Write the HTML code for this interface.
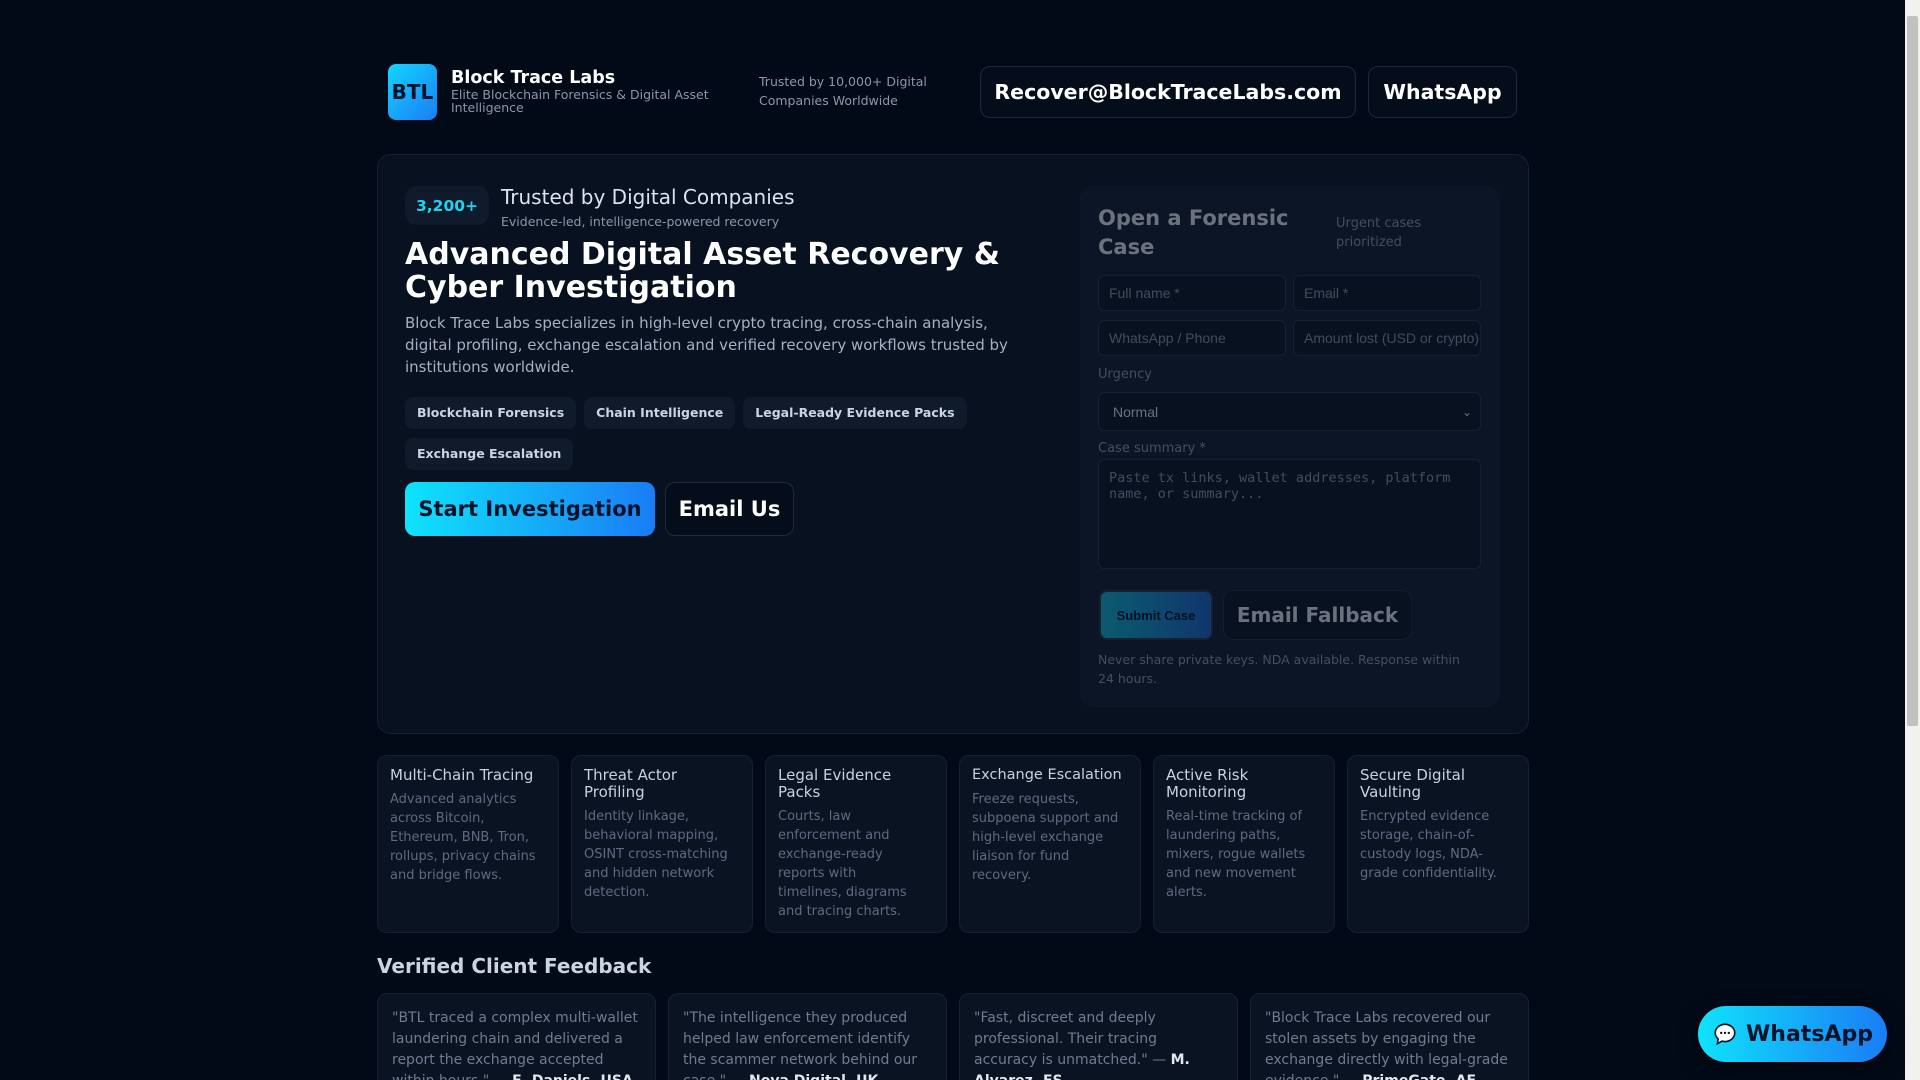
<!DOCTYPE html>
<html><head><meta charset="utf-8"><style>
*{box-sizing:border-box;margin:0;padding:0}
html,body{width:1920px;height:1080px;overflow:hidden}
body{background:#020a17;font-family:"DejaVu Sans","Liberation Sans",sans-serif;color:#e6edf6;position:relative}
.abs{position:absolute}
.sb{position:absolute;right:0;top:0;width:15px;height:1080px;background:#f1f1f1}
.sb i{position:absolute;left:2px;top:16px;width:11px;height:710px;background:#c1c1c1;border-radius:2px}
.logo{left:388px;top:64px;width:49px;height:56px;border-radius:8px;background:linear-gradient(135deg,#12d6ff,#1a7cf5);color:#04122a;font-weight:bold;font-size:20px;display:flex;align-items:center;justify-content:center}
.btn{position:absolute;border:1px solid #1e2a3c;border-radius:10px;background:#050d1b;color:#fff;font-weight:bold;display:flex;align-items:center;justify-content:center}
.card{position:absolute;background:#0a1322;border:1px solid #152033;border-radius:14px}
.tag{display:inline-block;background:#0f1a2b;border-radius:8px;padding:0 12px;height:32px;line-height:32px;font-size:12.5px;font-weight:bold;color:#cbd5e1;margin-right:8px}
.form{opacity:.45}
.inp{position:absolute;border:1px solid #24324a;border-radius:6px;background:#0a1322;font-family:"Liberation Sans",sans-serif;font-size:14px;color:#8593a8;padding-left:10px;display:flex;align-items:center}
.feat{position:absolute;top:755px;width:182px;height:178px;background:#0a1322;border:1px solid #152033;border-radius:10px;padding:11px 12px}
.feat h4{font-weight:normal;font-size:15px;line-height:17px;color:#c8d2de;margin-bottom:6px}
.feat p{font-size:13px;line-height:19px;color:#5d6a80}
.test{position:absolute;top:993px;width:279px;height:100px;background:#0a1322;border:1px solid #152033;border-radius:10px;padding:14px 14px;font-size:14px;line-height:21px;color:#6f7c90}
.test b{color:#e2e8f0}
</style></head><body>
<div class="sb"><i></i></div>
<div class="abs logo">BTL</div>
<div class="abs" style="left:451px;top:68px;font-size:17.5px;font-weight:bold;color:#fff">Block Trace Labs</div>
<div class="abs" style="left:451px;top:88px;font-size:12.5px;line-height:13px;color:#8a97ab;width:290px">Elite Blockchain Forensics &amp; Digital Asset Intelligence</div>
<div class="abs" style="left:759px;top:72px;font-size:12.5px;line-height:19px;color:#8a97ab;width:200px">Trusted by 10,000+ Digital Companies Worldwide</div>
<div class="btn" style="left:980px;top:66px;width:376px;height:52px;font-size:20.5px">Recover@BlockTraceLabs.com</div>
<div class="btn" style="left:1368px;top:66px;width:149px;height:52px;font-size:20.5px">WhatsApp</div>

<div class="card" style="left:377px;top:154px;width:1152px;height:580px;background:#081120"></div>
<div class="abs" style="left:405px;top:186px;width:84px;height:39px;border-radius:12px;background:#0f1a2b;color:#22d3ee;font-weight:bold;font-size:15.5px;display:flex;align-items:center;justify-content:center">3,200+</div>
<div class="abs" style="left:501px;top:185px;font-size:20px;color:#dbe3ee">Trusted by Digital Companies</div>
<div class="abs" style="left:501px;top:214px;font-size:12.5px;color:#8a97ab">Evidence-led, intelligence-powered recovery</div>
<h1 class="abs" style="left:405px;top:238px;font-size:30px;line-height:33px;color:#fff;width:640px">Advanced Digital Asset Recovery &amp; Cyber Investigation</h1>
<div class="abs" style="left:405px;top:312px;font-size:15px;line-height:22px;color:#a5b1c2;width:610px">Block Trace Labs specializes in high-level crypto tracing, cross-chain analysis, digital profiling, exchange escalation and verified recovery workflows trusted by institutions worldwide.</div>
<div class="abs" style="left:405px;top:391px;width:620px;line-height:41px"><span class="tag">Blockchain Forensics</span><span class="tag">Chain Intelligence</span><span class="tag">Legal-Ready Evidence Packs</span><br><span class="tag">Exchange Escalation</span></div>
<div class="abs" style="left:405px;top:482px;width:250px;height:54px;border-radius:10px;background:linear-gradient(90deg,#0fe3fb,#1a7cf5);color:#04122a;font-weight:bold;font-size:21px;display:flex;align-items:center;justify-content:center">Start Investigation</div>
<div class="btn" style="left:665px;top:482px;width:129px;height:54px;font-size:21px">Email Us</div>

<div class="form">
<div class="card" style="left:1080px;top:186px;width:420px;height:521px;background:#101b2c"></div>
<div class="abs" style="left:1098px;top:204px;font-size:21px;line-height:29px;font-weight:bold;color:#e2e8f0;width:200px">Open a Forensic Case</div>
<div class="abs" style="left:1336px;top:214px;font-size:13px;line-height:19px;color:#8a97ab;width:120px">Urgent cases prioritized</div>
<div class="inp" style="left:1098px;top:275px;width:188px;height:36px">Full name *</div>
<div class="inp" style="left:1293px;top:275px;width:188px;height:36px">Email *</div>
<div class="inp" style="left:1098px;top:320px;width:188px;height:36px">WhatsApp / Phone</div>
<div class="inp" style="left:1293px;top:320px;width:188px;height:36px">Amount lost (USD or crypto)</div>
<div class="abs" style="left:1098px;top:367px;font-size:13px;color:#8a97ab">Urgency</div>
<div class="inp" style="left:1098px;top:392px;width:383px;height:39px;color:#dbe3ee;padding-left:14px">Normal<span style="position:absolute;right:8px;font-size:12px">⌄</span></div>
<div class="abs" style="left:1098px;top:441px;font-size:13px;color:#8a97ab">Case summary *</div>
<div class="inp" style="left:1098px;top:459px;width:383px;height:110px;align-items:flex-start;padding-top:10px;font-family:'DejaVu Sans Mono',monospace;font-size:13.5px;line-height:16px">Paste tx links, wallet addresses, platform name, or summary...</div>
<div class="abs" style="left:1099px;top:590px;width:114px;height:50px;border-radius:8px;background:linear-gradient(90deg,#11b5cf,#1a63c9);color:#04122a;font-family:'Liberation Sans',sans-serif;font-weight:bold;font-size:13px;display:flex;align-items:center;justify-content:center;border:2px solid #2a3444">Submit Case</div>
<div class="btn" style="left:1223px;top:590px;width:189px;height:50px;font-size:20px;color:#e2e8f0;background:#0a1322">Email Fallback</div>
<div class="abs" style="left:1098px;top:650px;font-size:12.5px;line-height:19px;color:#8a97ab;width:380px">Never share private keys. NDA available. Response within 24 hours.</div>
</div>

<div class="feat" style="left:377px"><h4>Multi-Chain Tracing</h4><p>Advanced analytics across Bitcoin, Ethereum, BNB, Tron, rollups, privacy chains and bridge flows.</p></div>
<div class="feat" style="left:571px"><h4>Threat Actor Profiling</h4><p>Identity linkage, behavioral mapping, OSINT cross-matching and hidden network detection.</p></div>
<div class="feat" style="left:765px"><h4>Legal Evidence Packs</h4><p style="width:140px">Courts, law enforcement and exchange-ready reports with timelines, diagrams and tracing charts.</p></div>
<div class="feat" style="left:959px"><h4 style="font-size:14.5px;white-space:nowrap">Exchange Escalation</h4><p>Freeze requests, subpoena support and high-level exchange liaison for fund recovery.</p></div>
<div class="feat" style="left:1153px"><h4 style="width:120px">Active Risk Monitoring</h4><p style="width:140px">Real-time tracking of laundering paths, mixers, rogue wallets and new movement alerts.</p></div>
<div class="feat" style="left:1347px"><h4 style="width:120px">Secure Digital Vaulting</h4><p>Encrypted evidence storage, chain-of-custody logs, NDA-grade confidentiality.</p></div>

<div class="abs" style="left:377px;top:954px;font-size:20px;font-weight:bold;color:#cbd5e1">Verified Client Feedback</div>
<div class="test" style="left:377px">"BTL traced a complex multi-wallet laundering chain and delivered a report the exchange accepted within hours." — <b>E. Daniels, USA</b></div>
<div class="test" style="left:668px">"The intelligence they produced helped law enforcement identify the scammer network behind our case." — <b>Nova Digital, UK</b></div>
<div class="test" style="left:959px">"Fast, discreet and deeply professional. Their tracing accuracy is unmatched." — <b>M. Alvarez, ES</b></div>
<div class="test" style="left:1250px">"Block Trace Labs recovered our stolen assets by engaging the exchange directly with legal-grade evidence." — <b>PrimeGate, AE</b></div>

<div class="abs" style="left:1698px;top:1006px;width:189px;height:56px;border-radius:28px;background:linear-gradient(90deg,#0fe3fb,#1a7cf5);color:#04122a;font-weight:bold;font-size:22px;display:flex;align-items:center;justify-content:center;gap:8px;box-shadow:0 6px 20px rgba(0,0,0,.5)"><svg width="26" height="26" viewBox="0 0 24 24"><path d="M12 3C7 3 3 6.6 3 11c0 2.2 1 4.2 2.7 5.6L5 21l4.2-2.4c.9.3 1.8.4 2.8.4 5 0 9-3.6 9-8s-4-8-9-8z" fill="#fff" stroke="#04122a" stroke-width="1.5"/><circle cx="8.5" cy="11" r="1.1" fill="#04122a"/><circle cx="12" cy="11" r="1.1" fill="#04122a"/><circle cx="15.5" cy="11" r="1.1" fill="#04122a"/></svg>WhatsApp</div>
</body></html>
